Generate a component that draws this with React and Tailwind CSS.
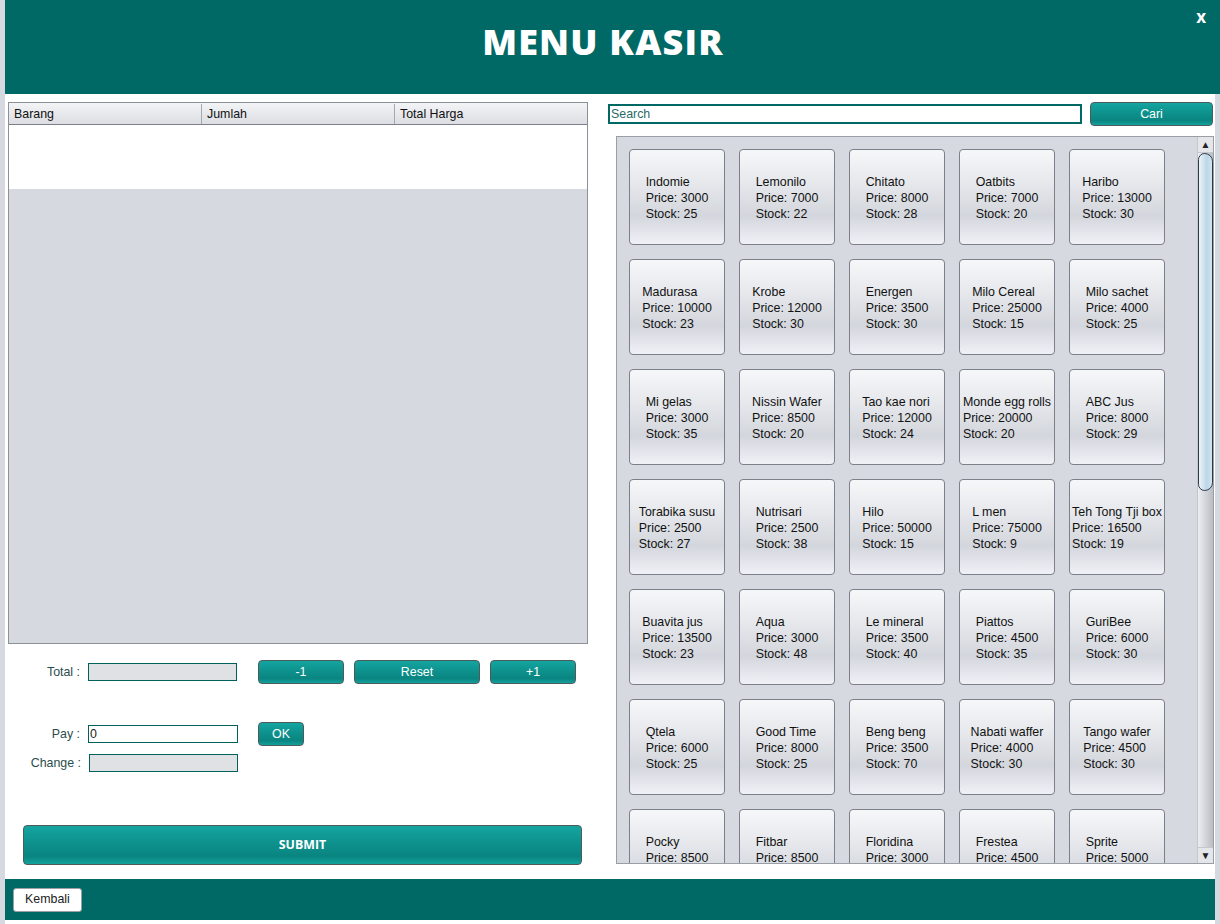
import React from 'react';

const products = [
  ['Indomie', 3000, 25], ['Lemonilo', 7000, 22], ['Chitato', 8000, 28], ['Oatbits', 7000, 20], ['Haribo', 13000, 30],
  ['Madurasa', 10000, 23], ['Krobe', 12000, 30], ['Energen', 3500, 30], ['Milo Cereal', 25000, 15], ['Milo sachet', 4000, 25],
  ['Mi gelas', 3000, 35], ['Nissin Wafer', 8500, 20], ['Tao kae nori', 12000, 24], ['Monde egg rolls', 20000, 20], ['ABC Jus', 8000, 29],
  ['Torabika susu', 2500, 27], ['Nutrisari', 2500, 38], ['Hilo', 50000, 15], ['L men', 75000, 9], ['Teh Tong Tji box', 16500, 19],
  ['Buavita jus', 13500, 23], ['Aqua', 3000, 48], ['Le mineral', 3500, 40], ['Piattos', 4500, 35], ['GuriBee', 6000, 30],
  ['Qtela', 6000, 25], ['Good Time', 8000, 25], ['Beng beng', 3500, 70], ['Nabati waffer', 4000, 30], ['Tango wafer', 4500, 30],
  ['Pocky', 8500, 20], ['Fitbar', 8500, 20], ['Floridina', 3000, 30], ['Frestea', 4500, 25], ['Sprite', 5000, 30],
];

const tealBtn =
  'rounded-[4px] border border-[#4f5a5a] bg-[linear-gradient(to_bottom,#14a5a0_0%,#0d8f8b_50%,#0a8581_80%,#12a29d_100%)] text-white text-[12.4px] flex items-center justify-center';

const ProductCard = ({ name, price, stock }) => (
  <div className="w-[96px] h-[96px] shrink-0 rounded-[4px] border border-[#7c8088] bg-[linear-gradient(to_bottom,#f6f7f9_0%,#e6e8ec_35%,#d3d6dc_70%,#eff1f7_100%)] flex items-center justify-center pt-[2px]">
    <div className="text-[12.4px] leading-[16px] text-[#111] whitespace-nowrap text-left">
      <div>{name}</div>
      <div>Price: {price}</div>
      <div>Stock: {stock}</div>
    </div>
  </div>
);

export default function App() {
  return (
    <div className="w-[1220px] h-[924px] bg-[#d6d9e0] flex font-['Liberation_Sans',Arial,sans-serif] overflow-hidden">
      <div className="w-[5px] shrink-0" />
      <div className="flex-1 flex flex-col">
        <header className="h-[94px] bg-[#006865] relative flex items-center justify-center shrink-0">
          <h1 className="text-white text-[36px] font-extrabold tracking-[1.2px] font-['Open_Sans',sans-serif] -ml-[19px] -mt-[10px]">
            MENU KASIR
          </h1>
          <span className="absolute right-[14px] top-[4px] text-white font-bold text-[17px] font-['Open_Sans',sans-serif]">x</span>
        </header>

        <div className="flex flex-1">
          <div className="w-[1210px] bg-white flex flex-col">
            <main className="h-[785px] flex">
              {/* left side: cart table + payment */}
              <section className="w-[595px] shrink-0 flex flex-col pt-[8px] pl-[3px]">
                <div className="w-[580px] h-[542px] border border-[#8c9099] bg-[#d6d9e0] flex flex-col">
                  <div className="h-[22px] flex border-b border-[#7a7f88] bg-[linear-gradient(to_bottom,#f3f4f6,#dcdee3)] text-[12.4px] text-[#111] pt-[1px]">
                    <div className="w-[193px] pl-[5px] flex items-center border-r border-[#a4a8b0]">Barang</div>
                    <div className="w-[193px] pl-[5px] flex items-center border-r border-[#a4a8b0]">Jumlah</div>
                    <div className="flex-1 pl-[5px] flex items-center">Total Harga</div>
                  </div>
                  <div className="h-[64px] bg-white" />
                </div>

                <div className="mt-[16px] h-[24px] flex items-center -ml-[3px] text-[12.4px] text-[#2a4d4c]">
                  <span className="w-[75px] text-right">Total :</span>
                  <div className="ml-[8px] w-[149px] h-[18px] border border-[#00605c] bg-[#dfe1e5]" />
                  <button className={`${tealBtn} ml-[21px] w-[86px] h-[24px]`}>-1</button>
                  <button className={`${tealBtn} ml-[10px] w-[126px] h-[24px]`}>Reset</button>
                  <button className={`${tealBtn} ml-[10px] w-[86px] h-[24px]`}>+1</button>
                </div>

                <div className="mt-[38px] h-[24px] flex items-center -ml-[3px] text-[12.4px] text-[#2a4d4c]">
                  <span className="w-[75px] text-right">Pay :</span>
                  <div className="ml-[8px] w-[150px] h-[18px] border border-[#00605c] bg-white flex items-center pl-[1px] text-[12.4px] text-[#222]">0</div>
                  <button className={`${tealBtn} ml-[20px] w-[46px] h-[24px]`}>OK</button>
                </div>

                <div className="mt-[8px] h-[18px] flex items-center -ml-[3px] text-[12.4px] text-[#2a4d4c]">
                  <span className="w-[76px] text-right">Change :</span>
                  <div className="ml-[8px] w-[149px] h-[18px] border border-[#00605c] bg-[#dfe1e5]" />
                </div>

                <button className={`${tealBtn} mt-[53px] ml-[15px] w-[559px] h-[40px] font-bold font-['Open_Sans',sans-serif]`}>
                  SUBMIT
                </button>
              </section>

              {/* right side: search + product grid */}
              <section className="flex-1 flex flex-col pt-[8px]">
                <div className="flex items-center h-[24px]">
                  <div className="ml-[8px] w-[474px] h-[20px] border-2 border-[#006865] bg-white flex items-center pl-[1px] text-[12.4px] text-[#2a6a68]">
                    Search
                  </div>
                  <button className={`${tealBtn} ml-[8px] w-[123px] h-[24px]`}>Cari</button>
                </div>

                <div className="mt-[10px] ml-[16px] w-[598px] h-[728px] border border-[#9a9ea6] bg-[#d6d9e0] flex overflow-hidden">
                  <div className="flex-1 overflow-hidden pt-[12px] pl-[12px]">
                    <div className="grid grid-cols-[repeat(5,96px)] gap-[14px]">
                      {products.map(([n, p, s]) => (
                        <ProductCard key={n} name={n} price={p} stock={s} />
                      ))}
                    </div>
                  </div>
                  <div className="w-[16px] shrink-0 flex flex-col bg-[linear-gradient(to_right,#eceef1,#b9bcc2)] border-l border-[#c4c7cc]">
                    <div className="h-[16px] bg-[#e4e6ea] flex items-center justify-center text-[10px] text-[#222] border-b border-[#c4c7cc]">▲</div>
                    <div className="h-[338px] rounded-tr-[10px] rounded-br-[10px] rounded-tl-[8px] rounded-bl-[8px] border border-[#2f3a48] bg-[linear-gradient(to_right,#eef4f8,#bcd6e8_60%,#d4e4f0)]" />
                    <div className="flex-1" />
                    <div className="h-[16px] bg-[#e4e6ea] flex items-center justify-center text-[10px] text-[#222] border-t border-[#c4c7cc]">▼</div>
                  </div>
                </div>
              </section>
            </main>

            <footer className="h-[41px] bg-[#006865] flex items-center pl-[8px]">
              <button className="w-[69px] h-[24px] rounded-[3px] border border-[#9ca0a6] bg-white text-[12.4px] text-[#222]">
                Kembali
              </button>
            </footer>
            <div className="h-[4px] bg-white" />
          </div>
          <div className="flex-1" />
        </div>
      </div>
    </div>
  );
}
